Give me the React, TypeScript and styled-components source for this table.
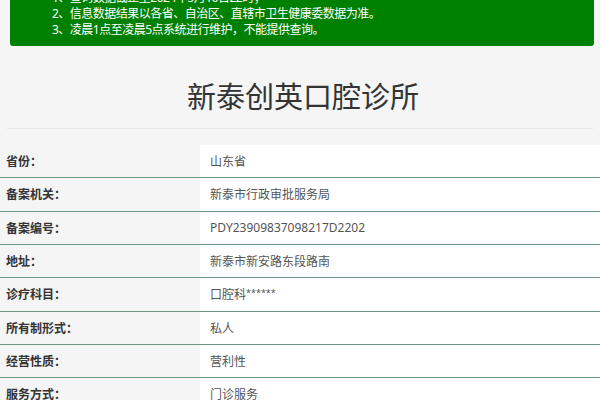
import React from "react";
import styled, { createGlobalStyle } from "styled-components";

const GlobalStyle = createGlobalStyle`
  html, body {
    margin: 0;
    padding: 0;
    background: #f5f5f5;
    overflow: hidden;
  }
  body {
    font-family: "Noto Sans", "Noto Sans CJK SC", sans-serif;
  }
`;

const Page = styled.div`
  width: 600px;
  height: 400px;
  overflow: hidden;
  background: #f5f5f5;
`;

const Notice = styled.div`
  margin: -18px 6px 0 10px;
  padding: 8px 0 8px 42px;
  background: #008000;
  border-radius: 3px;
  color: #ffffff;
  font-size: 12px;
  line-height: 16px;
  letter-spacing: -0.5px;
`;

const NoticeLine = styled.div`
  white-space: nowrap;
`;

const TitleBar = styled.div`
  margin: 0 7px;
  padding: 31px 0 11px;
  border-bottom: 1px solid #e6e6e6;
  text-align: center;
`;

const Title = styled.h1`
  margin: 0 0 0 6px;
  font-size: 29px;
  line-height: 40px;
  font-weight: 400;
  color: #333333;
`;

const Table = styled.div`
  margin-top: 16px;
  display: flex;
  flex-direction: column;
`;

const Row = styled.div`
  display: grid;
  grid-template-columns: 200px 1fr;
  height: 32.33px;
  border-bottom: 1px solid #6a9880;
  box-shadow: 0 1px 0 #d3e3d8;
`;

const Label = styled.div`
  display: flex;
  align-items: center;
  padding-left: 6px;
  font-size: 12px;
  font-weight: 700;
  color: #333333;
  background: #f5f5f5;
`;

const Value = styled.div`
  display: flex;
  align-items: center;
  padding-left: 10px;
  font-size: 12px;
  color: #555555;
  background: #ffffff;
`;

const Stars = styled.span`
  font-size: 9px;
  line-height: 1;
  align-self: flex-start;
  margin-top: 10px;
`;

const rows: [string, string][] = [
  ["省份：", "山东省"],
  ["备案机关：", "新泰市行政审批服务局"],
  ["备案编号：", "PDY23909837098217D2202"],
  ["地址：", "新泰市新安路东段路南"],
  ["诊疗科目：", "口腔科******"],
  ["所有制形式：", "私人"],
  ["经营性质：", "营利性"],
  ["服务方式：", "门诊服务"],
];

function renderValue(v: string) {
  const m = v.match(/^(.*?)(\*+)$/);
  if (!m) return v;
  return (
    <>
      {m[1]}
      <Stars>{m[2]}</Stars>
    </>
  );
}

export default function App() {
  return (
    <Page>
      <GlobalStyle />
      <Notice>
        <NoticeLine>1、查询数据截止至2024年5月16日22时；</NoticeLine>
        <NoticeLine>2、信息数据结果以各省、自治区、直辖市卫生健康委数据为准。</NoticeLine>
        <NoticeLine>3、凌晨1点至凌晨5点系统进行维护，不能提供查询。</NoticeLine>
      </Notice>
      <TitleBar>
        <Title>新泰创英口腔诊所</Title>
      </TitleBar>
      <Table>
        {rows.map(([k, v]) => (
          <Row key={k}>
            <Label>{k}</Label>
            <Value>{renderValue(v)}</Value>
          </Row>
        ))}
      </Table>
    </Page>
  );
}
